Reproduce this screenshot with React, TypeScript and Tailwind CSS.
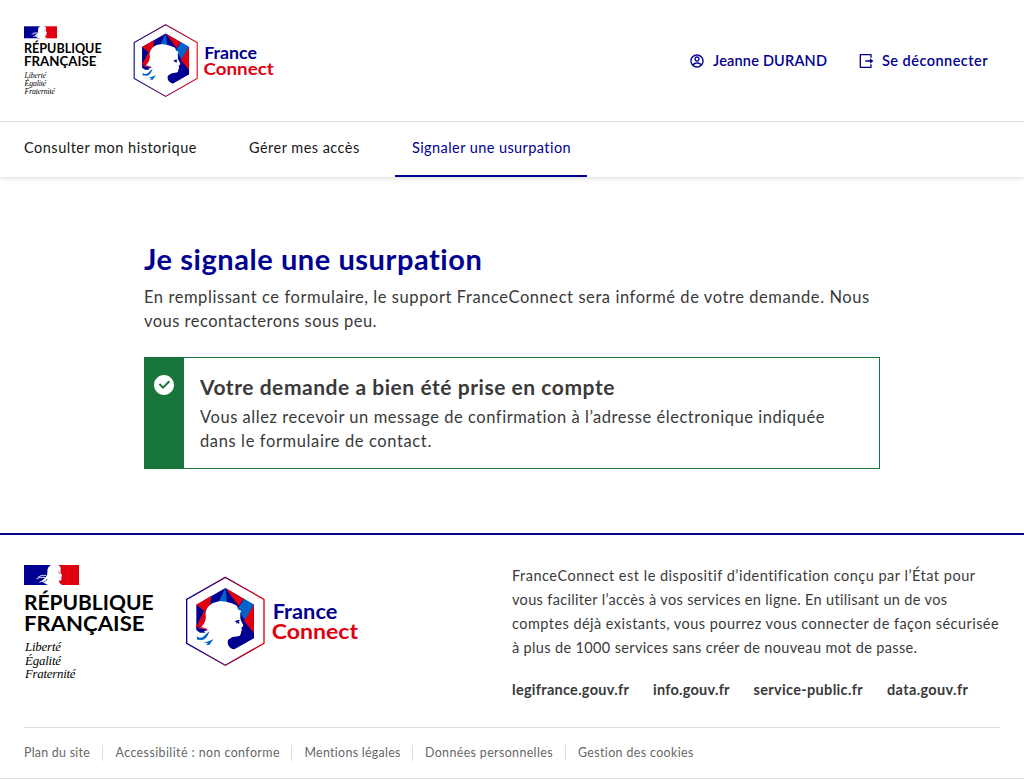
import { RiAccountCircleLine, RiCheckboxCircleFill } from "react-icons/ri";

function RepubliqueLogo({ className }: { className: string }) {
  return (
    <svg viewBox="0 0 132 118" className={className} role="img" aria-label="République française">
      <path d="M0 0H27V20H0Z" fill="#000091" />
      <path d="M33 0H55V20H33Z" fill="#e1000f" />
      <path
        d="M27 0C24.500 1.500 23.300 3.500 23.400 6.200C23.400 9 23 11 21.500 12.500L17.500 16.500L20 18L24 20H38.200C36 18.500 34.600 17 35 15.500C37.500 15.800 38 15 37.300 13.700C37.800 13 37.600 12.400 37 11.900C38.300 11.300 38.600 10.600 37.700 9.700C36.200 8 36.400 6 36.800 4.500C36.700 2.500 36 .8 34 0Z"
        fill="#fff"
      />
      <path
        d="M14 12.300C16.500 10.500 18.500 10 22 10.500M12.500 13.800C15 12.500 18 12 21.500 12.500M15.500 17C17.500 16.700 19.500 15.500 21 13.500"
        stroke="#fff"
        strokeWidth=".9"
        fill="none"
      />
      <path d="M18.500 17.500C21 17 22.500 15.500 23 14" stroke="#000091" strokeWidth=".7" fill="none" />
      <path d="M34.200 7.300h2M34.700 8.500h1" stroke="#777" strokeWidth=".7" />
      <g className="font-['Lato',sans-serif] font-bold" fontSize="20.600">
        <text x="0" y="44.900" textLength="129.500" lengthAdjust="spacingAndGlyphs">RÉPUBLIQUE</text>
        <text x="0" y="65.900" textLength="120.500" lengthAdjust="spacingAndGlyphs">FRANÇAISE</text>
      </g>
      <g className="font-['Liberation_Serif',serif] italic" fontSize="12.800">
        <text x="1" y="85.900" textLength="36">Liberté</text>
        <text x="1" y="99.600" textLength="36">Égalité</text>
        <text x="1" y="113.200" textLength="50.500">Fraternité</text>
      </g>
    </svg>
  );
}

function FranceConnectLogo({ className, id }: { className: string; id: string }) {
  return (
    <svg viewBox="0 0 525 282" className={className} role="img" aria-label="FranceConnect">
      <defs>
        <linearGradient id={id} x1="0" x2="1" y1="0" y2="0">
          <stop offset="0" stopColor="#000091" />
          <stop offset="1" stopColor="#e1000f" />
        </linearGradient>
      </defs>
      <path d="M124 10L240 76V208L124 274L8 208V76Z" fill="#fff" stroke={`url(#${id})`} strokeWidth="4" />
      <path d="M124 42L210 92V192L150 226L120 130L37 166V92Z" fill="#000091" />
      <path d="M37 92L82 66L78 96L62 112Z" fill="#e1000f" />
      <path d="M60 112L76 104L72 160L38 155Z" fill="#e1000f" />
      <path d="M124 42L102 88H130Z" fill="#0063cb" />
      <path d="M124 42L180 75L164 96Z" fill="#e1000f" />
      <path d="M180 75L210 92L184 140L160 106Z" fill="#0063cb" />
      <path d="M210 92V178L180 140Z" fill="#e1000f" />
      <path
        d="M66 128C60 108 76 86 100 83C118 79 140 86 155 93C162 97 160 102 163 107C172 108 173 112 168 117C170 124 168 130 170 137C172 144 179 151 178 156C176 159 172 160 172 163C175 168 173 171 171 174C174 179 171 184 166 186C156 188 143 188 136 194C128 201 131 217 142 230L124 240L75 210L34 200V164C50 164 64 152 66 128Z"
        fill="#fff"
      />
      <path d="M132 198C141 190 156 191 167 187L175 168L176 158L182 150L210 177V192L150 226C137 224 128 212 132 198Z" fill="#000091" />
      <path d="M152 143C157 139 162 138 168 138L164 142L166 146L166 149L160 147L155 149L158 145Z" fill="#000091" />
      <path d="M37 150L56 160L74 166L60 168L37 162Z" fill="#e1000f" opacity=".8" />
      <path d="M37 158C48 166 60 163 72 168L60 172L64 176H48L37 168Z" fill="#000091" />
      <path d="M38 187C50 196 58 190 66 180L76 172C72 184 68 194 56 198L40 197Z" fill="#0063cb" />
      <path d="M58 206C70 204 78 200 88 196L76 213H66L72 207Z" fill="#0063cb" />
      <g className="font-['Lato',sans-serif] font-bold" fontSize="61">
        <text x="266" y="136" fill="#000091" textLength="194" lengthAdjust="spacingAndGlyphs">France</text>
        <text x="263" y="194" fill="#e1000f" textLength="259" lengthAdjust="spacingAndGlyphs">Connect</text>
      </g>
    </svg>
  );
}

function LogoutIcon() {
  return (
    <svg viewBox="0 0 24 24" className="size-4" fill="currentColor" aria-hidden="true">
      <path d="M2.500 2.500a1 1 0 0 1 1-1h16a1 1 0 0 1 1 1V7h-2V3.500h-14v17h14V17h2v4.500a1 1 0 0 1-1 1h-16a1 1 0 0 1-1-1Zm15.500 13.500v-3h-7v-2h7V8l5 4Z" />
    </svg>
  );
}

const intro = [
  { label: "FranceConnect est le dispositif d’identification conçu par l’État pour", style: "tracking-[0.5px]" },
  { label: "vous faciliter l’accès à vos services en ligne. En utilisant un de vos", style: "tracking-[0.34px]" },
  { label: "comptes déjà existants, vous pourrez vous connecter de façon sécurisée", style: "tracking-[0.45px]" },
  { label: "à plus de 1000 services sans créer de nouveau mot de passe.", style: "tracking-[0.35px]" },
];

const partners = [
  { label: "legifrance.gouv.fr", style: "w-[117px] tracking-[0.28px]" },
  { label: "info.gouv.fr", style: "w-[76.500px] tracking-[0.25px]" },
  { label: "service-public.fr", style: "w-[109.500px] tracking-[0.33px]" },
  { label: "data.gouv.fr", style: "w-[82px] tracking-[0.36px]" },
];

const legal = [
  { label: "Plan du site", style: "w-[78px] tracking-[0.26px]" },
  { label: "Accessibilité : non conforme", style: "w-[189px] border-l pl-[12.500px] tracking-[0.43px]" },
  { label: "Mentions légales", style: "w-[121px] border-l pl-[12.500px] tracking-[0.3px]" },
  { label: "Données personnelles", style: "w-[153px] border-l pl-3 tracking-[0.38px]" },
  { label: "Gestion des cookies", style: "border-l pl-3 tracking-[0.38px]" },
];

export default function App() {
  return (
    <div className="flex h-[779px] flex-col overflow-hidden bg-white font-['Lato',sans-serif] whitespace-nowrap text-[#3a3a3a]">
      <header className="shrink-0 shadow-[0_1px_5px_rgba(0,0,18,0.16)]">
        <div className="flex h-[121px] items-start pl-6">
          <RepubliqueLogo className="mt-[26px] h-[71.400px] w-[79.200px]" />
          <FranceConnectLogo id="hex-header" className="mt-[21.600px] ml-[29.200px] h-[76.600px] w-[142.600px]" />
          <div className="mt-[49px] ml-auto flex pr-9 text-[14.500px] leading-6 font-semibold text-[#000091]">
            <a className="flex w-[169px] items-center gap-2 tracking-[0.2px]">
              <RiAccountCircleLine className="size-4" />
              Jeanne DURAND
            </a>
            <a className="flex w-[130px] items-center gap-2 tracking-[0.47px]">
              <LogoutIcon />
              Se déconnecter
            </a>
          </div>
        </div>
        <nav className="flex h-14 border-t border-[#ddd] pl-2 text-[14.500px] leading-6 text-[#161616]">
          <a className="mr-5 w-[205px] px-4 pt-[14px] tracking-[0.5px]">Consulter mon historique</a>
          <a className="mr-5 w-[142px] px-4 pt-[14px] tracking-[0.46px]">Gérer mes accès</a>
          <a className="w-48 border-b-2 border-[#000091] pt-[14px] pl-[17px] tracking-[0.42px] text-[#000091]">
            Signaler une usurpation
          </a>
        </nav>
      </header>

      <main className="h-[356px] shrink-0 px-36 pt-16">
        <h1 className="text-[29px] leading-9 font-bold tracking-[0.56px] text-[#000091]">Je signale une usurpation</h1>
        <p className="mt-2 text-[16.500px] leading-6">
          <span className="tracking-[0.57px]">
            En remplissant ce formulaire, le support FranceConnect sera informé de votre demande. Nous
          </span>
          <br />
          <span className="tracking-[0.48px]">vous recontacterons sous peu.</span>
        </p>
        <div className="mt-6 flex h-28 border border-[#18753c]">
          <div className="flex w-[39px] bg-[#18753c] pt-[15px] pl-[7px]">
            <RiCheckboxCircleFill className="size-6 text-white" />
          </div>
          <div className="pt-[15px] pl-4">
            <h3 className="text-[21px] leading-7 font-bold tracking-[0.54px]">Votre demande a bien été prise en compte</h3>
            <p className="mt-1 text-[16.500px] leading-6">
              <span className="tracking-[0.55px]">
                Vous allez recevoir un message de confirmation à l’adresse électronique indiquée
              </span>
              <br />
              <span className="tracking-[0.62px]">dans le formulaire de contact.</span>
            </p>
          </div>
        </div>
      </main>

      <footer className="flex h-[246px] shrink-0 flex-col border-t-2 border-b border-t-[#000091] border-b-[#ddd] px-6">
        <div className="flex h-48">
          <RepubliqueLogo className="mt-[30px] h-[118px] w-[132px]" />
          <FranceConnectLogo id="hex-footer" className="mt-[39px] ml-7 h-[94px] w-[175px]" />
          <div className="ml-[153px] pt-[29px]">
            <p className="text-[14.500px] leading-6">
              {intro.map((line) => (
                <span key={line.label} className={`block ${line.style}`}>
                  {line.label}
                </span>
              ))}
            </p>
            <div className="mt-[18px] flex gap-6 text-[14.500px] leading-6 font-bold">
              {partners.map((p) => (
                <a key={p.label} className={p.style}>
                  {p.label}
                </a>
              ))}
            </div>
          </div>
        </div>
        <div className="flex border-t border-[#ddd] pt-[17px] text-[12.400px] leading-4 text-[#666]">
          {legal.map((l) => (
            <a key={l.label} className={`${l.style} border-[#ddd]`}>
              {l.label}
            </a>
          ))}
        </div>
      </footer>
    </div>
  );
}
